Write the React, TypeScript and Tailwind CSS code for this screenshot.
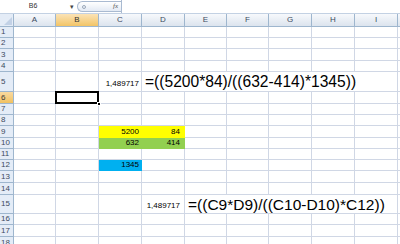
import React from "react";

const colW = ["w-[42px]", "w-[43px]", "w-[43px]", "w-[43px]", "w-[42px]", "w-[42px]", "w-[43px]", "w-[43px]", "w-[43px]"];
const letters = ["A", "B", "C", "D", "E", "F", "G", "H", "I"];

function Cell({ w, className = "", children }: { w: string; className?: string; children?: React.ReactNode }) {
  return (
    <div className={`${w} shrink-0 h-full border-r border-b flex items-end whitespace-nowrap ${className}`}>
      {children}
    </div>
  );
}

function RowHead({ n, sel }: { n: number; sel?: boolean }) {
  return (
    <div
      className={`w-[14px] shrink-0 h-full flex items-center pl-[1px] text-[8px] border-r border-b border-[#9eb6ce] ${
        sel ? "bg-linear-to-b from-[#f9d99f] to-[#f1c15f] text-[#3b3b3b]" : "bg-[#e4ecf7] text-[#3c4a5e]"
      }`}
    >
      {n}
    </div>
  );
}

function Row({ n, h, sel, children }: { n: number; h: string; sel?: boolean; children?: React.ReactNode }) {
  return (
    <div className={`flex ${h}`}>
      <RowHead n={n} sel={sel} />
      {children ?? (
        <>
          {colW.map((w, i) => (
            <Cell key={i} w={w} className="border-[#d0d7e5]" />
          ))}
          <div className="flex-1 h-full border-b border-[#d0d7e5]" />
        </>
      )}
    </div>
  );
}

const g = "border-[#d0d7e5]";

export default function App() {
  return (
    <div className="w-[400px] h-[244px] overflow-hidden bg-white font-['Liberation_Sans',Arial,sans-serif] text-black select-none">
      {/* formula bar */}
      <div className="h-[14px] flex items-stretch bg-white border-b border-[#c3d1e3]">
        <div className="w-[66px] flex items-center justify-center text-[7px] text-[#333]">B6</div>
        <div className="w-[11px] flex items-center justify-center text-[7px] text-[#444] leading-none">▾</div>
        <div className="w-[44px] my-[1px] flex items-center justify-between pl-[4px] pr-[3px] rounded-l-[6px] border border-r-0 border-[#a9bad1] bg-linear-to-b from-[#ffffff] to-[#e3eaf4]">
          <span className="w-[4px] h-[4px] rounded-full border border-[#9aa8ba]" />
          <span className="text-[7px] italic font-['Liberation_Serif',serif] text-[#555] leading-none">fx</span>
        </div>
        <div className="flex-1 border-l border-[#a9bad1] bg-white" />
      </div>

      {/* column headers */}
      <div className="flex h-[13px]">
        <div className="w-[14px] shrink-0 h-full relative bg-[#e4ecf7] border-r border-b border-[#9eb6ce]">
          <div className="absolute right-[1px] bottom-[1px] w-0 h-0 border-l-[8px] border-l-transparent border-b-[8px] border-b-[#c2d1e6]" />
        </div>
        {letters.map((l, i) => (
          <div
            key={l}
            className={`${colW[i]} shrink-0 h-full flex items-center justify-center text-[8px] border-r border-b border-[#9eb6ce] ${
              l === "B"
                ? "bg-linear-to-b from-[#fbe3b5] to-[#f2c465] text-[#333]"
                : "bg-linear-to-b from-[#f7f9fc] to-[#dce4ee] text-[#3c4a5e]"
            }`}
          >
            {l}
          </div>
        ))}
        <div className="flex-1 h-full bg-linear-to-b from-[#f7f9fc] to-[#dce4ee] border-b border-[#9eb6ce]" />
      </div>

      {/* rows */}
      <Row n={1} h="h-[11px]" />
      <Row n={2} h="h-[11px]" />
      <Row n={3} h="h-[12px]" />
      <Row n={4} h="h-[11px]" />
      <Row n={5} h="h-[20px]">
        <Cell w="w-[42px]" className={g} />
        <Cell w="w-[43px]" className={g} />
        <Cell w="w-[43px]" className={`${g} justify-end pr-[2px] pb-[3px] text-[8px] leading-none`}>
          1,489717
        </Cell>
        <Cell w="w-[256px]" className={`${g} pl-[3px] pb-[1px] text-[15.6px] leading-none`}>
          =((5200*84)/((632-414)*1345))
        </Cell>
        <div className={`flex-1 h-full border-b ${g}`} />
      </Row>
      <Row n={6} h="h-[12px]" sel>
        <Cell w="w-[42px]" className={g} />
        <Cell w="w-[43px]" className={`${g} relative`}>
          <div className="absolute -left-[1px] -top-[1px] -right-[1px] -bottom-[1px] border-2 border-black" />
          <div className="absolute -right-[3px] -bottom-[3px] w-[4px] h-[4px] bg-black border border-white" />
        </Cell>
        {colW.slice(2).map((w, i) => (
          <Cell key={i} w={w} className={g} />
        ))}
        <div className={`flex-1 h-full border-b ${g}`} />
      </Row>
      <Row n={7} h="h-[11px]" />
      <Row n={8} h="h-[11px]" />
      <Row n={9} h="h-[12px]">
        <Cell w="w-[42px]" className={g} />
        <Cell w="w-[43px]" className={g} />
        <Cell w="w-[43px]" className="bg-[#ffff00] border-[#ffff00] justify-end pr-[2px] pb-[1px] text-[8px] leading-none">
          5200
        </Cell>
        <Cell w="w-[43px]" className="bg-[#ffff00] border-[#ffff00] justify-end pr-[4px] pb-[1px] text-[8px] leading-none">
          84
        </Cell>
        {colW.slice(4).map((w, i) => (
          <Cell key={i} w={w} className={g} />
        ))}
        <div className={`flex-1 h-full border-b ${g}`} />
      </Row>
      <Row n={10} h="h-[11px]">
        <Cell w="w-[42px]" className={g} />
        <Cell w="w-[43px]" className={g} />
        <Cell w="w-[43px]" className="bg-[#92d050] border-[#92d050] justify-end pr-[2px] pb-[1px] text-[8px] leading-none">
          632
        </Cell>
        <Cell w="w-[43px]" className="bg-[#92d050] border-[#92d050] justify-end pr-[4px] pb-[1px] text-[8px] leading-none">
          414
        </Cell>
        {colW.slice(4).map((w, i) => (
          <Cell key={i} w={w} className={g} />
        ))}
        <div className={`flex-1 h-full border-b ${g}`} />
      </Row>
      <Row n={11} h="h-[11px]" />
      <Row n={12} h="h-[11px]">
        <Cell w="w-[42px]" className={g} />
        <Cell w="w-[43px]" className={g} />
        <Cell w="w-[43px]" className="bg-[#00b0f0] border-[#00b0f0] justify-end pr-[2px] pb-[1px] text-[8px] leading-none">
          1345
        </Cell>
        {colW.slice(3).map((w, i) => (
          <Cell key={i} w={w} className={g} />
        ))}
        <div className={`flex-1 h-full border-b ${g}`} />
      </Row>
      <Row n={13} h="h-[12px]" />
      <Row n={14} h="h-[12px]" />
      <Row n={15} h="h-[19px]">
        <Cell w="w-[42px]" className={g} />
        <Cell w="w-[43px]" className={g} />
        <Cell w="w-[43px]" className={g} />
        <Cell w="w-[43px]" className={`${g} justify-end pr-[4px] pb-[3px] text-[8px] leading-none`}>
          1,489717
        </Cell>
        <Cell w="w-[213px]" className={`${g} pl-[3px] pb-[1px] text-[15.5px] leading-none`}>
          =((C9*D9)/((C10-D10)*C12))
        </Cell>
        <div className={`flex-1 h-full border-b ${g}`} />
      </Row>
      <Row n={16} h="h-[11px]" />
      <Row n={17} h="h-[12px]" />
      <Row n={18} h="h-[12px]" />
    </div>
  );
}
